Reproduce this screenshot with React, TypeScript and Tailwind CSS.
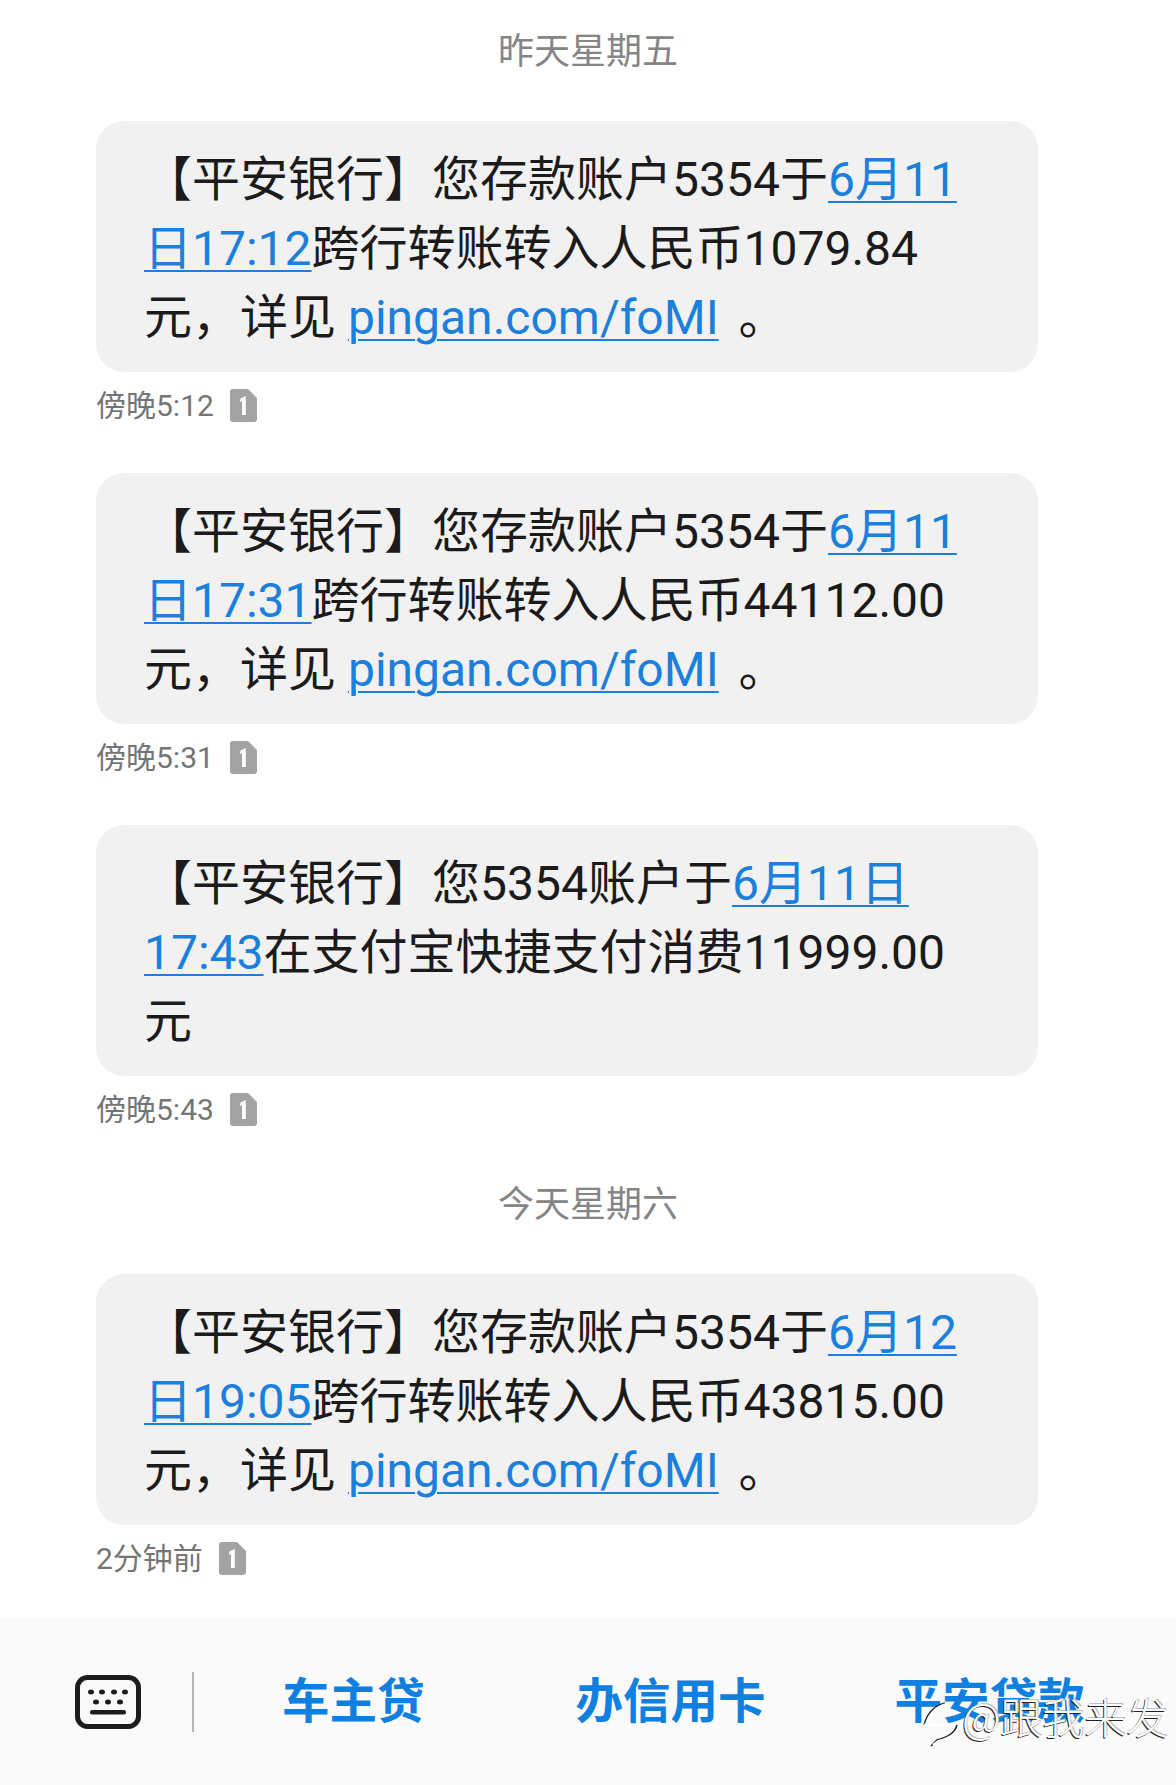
const cjk = '"Noto Sans CJK SC", sans-serif';
const font = `Roboto, "Noto Sans CJK SC", sans-serif`;

function L({ children }: { children: React.ReactNode }) {
  return <span className="text-[#1a80dc] underline decoration-2 underline-offset-[5px]">{children}</span>;
}

function Sim() {
  return (
    <svg width="27" height="33" viewBox="0 0 27 33" className="ml-[16px] mt-[-1px]">
      <path d="M3 0H18L27 9V30a3 3 0 0 1-3 3H3a3 3 0 0 1-3-3V3a3 3 0 0 1 3-3Z" fill="#a3a3a3" />
      <path d="M10.5 9.5 15.8 7V26H12V12L10 13Z" fill="#fff" />
    </svg>
  );
}

function Msg({ lines, time }: { lines: React.ReactNode[]; time: string }) {
  return (
    <div className="pl-[96px] pr-[138px]">
      <div className="h-[251px] rounded-[28px] bg-[#f1f1f2] pl-[48px] pt-[24px] text-[48px] leading-[69px] text-[#1b1b1b]">
        {lines.map((l, i) => (
          <div key={i} className="h-[69px] whitespace-nowrap">{l}</div>
        ))}
      </div>
      <div className="mt-[17px] flex h-[33px] items-center text-[30px] leading-[33px] text-[#757575]">
        <span>{time}</span>
        <Sim />
      </div>
    </div>
  );
}

function Day({ children, className }: { children: React.ReactNode; className: string }) {
  return <div className={`text-center text-[36px] leading-[40px] text-[#858585] ${className}`}>{children}</div>;
}

export default function App() {
  return (
    <div className="relative flex h-[1785px] w-[1176px] flex-col overflow-hidden bg-white" style={{ fontFamily: font }}>
      <Day className="pt-[32px]">昨天星期五</Day>
      <div className="mt-[49px]">
        <Msg
          time="傍晚5:12"
          lines={[
            <>【平安银行】您存款账户5354于<L>6月11</L></>,
            <><L>日17:12</L>跨行转账转入人民币1079.84</>,
            <>元，详见 <L>pingan.com/foMI</L><span className="ml-[8px]"> 。</span></>,
          ]}
        />
      </div>
      <div className="mt-[51px]">
        <Msg
          time="傍晚5:31"
          lines={[
            <>【平安银行】您存款账户5354于<L>6月11</L></>,
            <><L>日17:31</L>跨行转账转入人民币44112.00</>,
            <>元，详见 <L>pingan.com/foMI</L><span className="ml-[8px]"> 。</span></>,
          ]}
        />
      </div>
      <div className="mt-[51px]">
        <Msg
          time="傍晚5:43"
          lines={[
            <>【平安银行】您5354账户于<L>6月11日</L></>,
            <><L>17:43</L>在支付宝快捷支付消费11999.00</>,
            <>元</>,
          ]}
        />
      </div>
      <Day className="mt-[59px]">今天星期六</Day>
      <div className="mt-[49px]">
        <Msg
          time="2分钟前"
          lines={[
            <>【平安银行】您存款账户5354于<L>6月12</L></>,
            <><L>日19:05</L>跨行转账转入人民币43815.00</>,
            <>元，详见 <L>pingan.com/foMI</L><span className="ml-[8px]"> 。</span></>,
          ]}
        />
      </div>
      <div className="mt-[43px] flex h-[168px] items-center bg-[#fafafa]">
        <svg width="66" height="54" viewBox="0 0 66 54" className="ml-[75px]">
          <rect x="2.5" y="2.5" width="61" height="49" rx="10" fill="#fafafa" stroke="#1c1c1c" strokeWidth="5" />
          <g fill="#1c1c1c">
            <ellipse cx="16" cy="17" rx="3" ry="2.5" /><ellipse cx="27" cy="17" rx="3" ry="2.5" /><ellipse cx="39" cy="17" rx="3" ry="2.5" /><ellipse cx="50" cy="17" rx="3" ry="2.5" />
            <ellipse cx="21" cy="27" rx="3" ry="2.5" /><ellipse cx="33" cy="27" rx="3" ry="2.5" /><ellipse cx="45" cy="27" rx="3" ry="2.5" />
            <rect x="15" y="35" width="36" height="4.5" rx="2" />
          </g>
        </svg>
        <div className="ml-[51px] h-[60px] w-[2px] bg-[#b5b5b5]" />
        <div className="ml-[88px] mt-[2px] text-[47.5px] font-bold leading-none text-[#0f7fe0]">车主贷</div>
        <div className="ml-[151px] mt-[2px] text-[47.5px] font-bold leading-none text-[#0f7fe0]">办信用卡</div>
        <div className="ml-[129px] mt-[2px] whitespace-nowrap text-[47.5px] font-bold leading-none text-[#0f7fe0]">平安贷款</div>
      </div>
      <div className="absolute left-[921px] top-[1700px] flex items-start">
        <svg width="46" height="48" viewBox="0 0 46 48" fill="none">
          <path d="M3 25C6 14 12 6 24 3" stroke="#222" strokeWidth="1.5" />
          <path d="M5 25C8 15 14 7 26 4" stroke="#fff" strokeWidth="2.5" />
          <path d="M3 25H36" stroke="#fff" strokeWidth="2.5" />
          <path d="M36 25C34 34 24 38 16 40L10 46" stroke="#222" strokeWidth="1.5" />
          <path d="M38 26C36 35 26 39 18 41L12 45" stroke="#fff" strokeWidth="2.5" />
        </svg>
        <span
          className="ml-[-5px] mt-[-8px] whitespace-nowrap text-[42px] font-light leading-[48px] text-white"
          style={{ textShadow: "-1px 1px 0 #222, 1px -1px 0 #bbb", fontFamily: cjk }}
        >
          @跟我来发
        </span>
      </div>
    </div>
  );
}
